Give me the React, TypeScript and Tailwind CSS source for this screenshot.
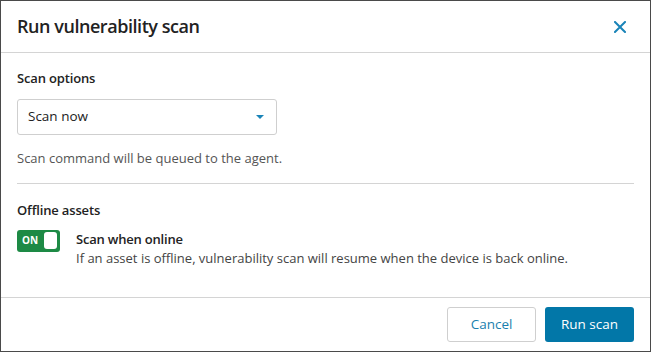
import React from "react";

export default function App() {
  return (
    <div className="w-[651px] h-[352px] bg-white border border-[#4a4a4a] flex flex-col text-[#222]" style={{ fontFamily: '"Open Sans", "Noto Sans", sans-serif' }}>
      <div className="h-[52px] flex items-center justify-between pl-[16px] pr-[24px] border-b border-[#d4d4d4] shrink-0">
        <div className="text-[18px] font-semibold text-[#222] tracking-[-0.45px]">Run vulnerability scan</div>
        <svg width="12" height="12" viewBox="0 0 12 12" className="text-[#1a84b8]">
          <path d="M1 1L11 11M11 1L1 11" stroke="currentColor" strokeWidth="2" strokeLinecap="square" />
        </svg>
      </div>
      <div className="flex-1 px-[16px] pt-[16px]">
        <div className="text-[13px] font-semibold tracking-[-0.15px]">Scan options</div>
        <div className="mt-[10px] w-[260px] h-[36px] border border-[#cfcfcf] rounded-[3px] flex items-center justify-between pl-[10px] pr-[12px]">
          <span className="text-[13.5px]">Scan now</span>
          <svg width="8" height="4" viewBox="0 0 8 4"><path d="M0 0H8L4 4Z" fill="#1a84b8" /></svg>
        </div>
        <div className="mt-[14px] text-[13px] text-[#555]">Scan command will be queued to the agent.</div>
        <div className="mt-[15px] h-px bg-[#d4d4d4]" />
        <div className="mt-[17px] text-[13px] font-semibold tracking-[-0.15px]">Offline assets</div>
        <div className="mt-[8px] flex gap-[16px]">
          <div className="w-[43px] h-[22px] rounded-[3px] bg-[#1d8a45] flex items-center justify-between pl-[5px] pr-[3px] shrink-0 mt-[1px]">
            <span className="text-white text-[10px] font-bold">ON</span>
            <span className="block w-[13px] h-[17px] bg-white rounded-[3px]" />
          </div>
          <div className="flex flex-col">
            <span className="text-[13px] font-semibold tracking-[-0.2px] leading-[20px] text-[#222]">Scan when online</span>
            <span className="text-[13px] text-[#444] leading-[19px]">If an asset is offline, vulnerability scan will resume when the device is back online.</span>
          </div>
        </div>
      </div>
      <div className="h-[54px] shrink-0 border-t border-[#d4d4d4] flex items-center justify-end gap-[9px] pr-[16px]">
        <button className="w-[89px] h-[35px] border border-[#cfcfcf] rounded-[3px] text-[13.5px] text-[#1a7fae] bg-white">Cancel</button>
        <button className="w-[89px] h-[35px] rounded-[3px] text-[13.5px] text-white bg-[#0277a8]">Run scan</button>
      </div>
    </div>
  );
}
